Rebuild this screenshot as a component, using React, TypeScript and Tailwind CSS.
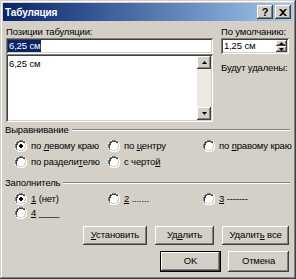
import React from "react";

const raised =
  "shadow-[inset_-1px_-1px_#404040,inset_1px_1px_#ffffff,inset_-2px_-2px_#808080,inset_2px_2px_#d4d0c8]";
const sunken =
  "shadow-[inset_1px_1px_#808080,inset_-1px_-1px_#ffffff,inset_2px_2px_#404040,inset_-2px_-2px_#d4d0c8]";

function Radio({ checked }: { checked?: boolean }) {
  return (
    <svg width="12" height="12" viewBox="0 0 12 12" className="shrink-0">
      <path d="M4 0h4l2 1 1 2 1 1v4l-1 2-1 1-2 1H4l-2-1-1-1-1-2V4l1-2 1-1z" fill="#ffffff" />
      <path d="M4 0.5h4M2 1.5h2M8 1.5h2M1.5 2v2M0.5 4v4M1.5 8v2" stroke="#808080" strokeWidth="1" fill="none" />
      <path d="M4 1.5h4M2 2.5h2M8 2.5h2M2.5 3v2M1.5 4v4" stroke="#404040" strokeWidth="1" fill="none" />
      <path d="M2 10.5h2M4 11.5h4M8 10.5h2M10.5 8v2M11.5 4v4M10.5 2v2" stroke="#ffffff" strokeWidth="1" fill="none" />
      <path d="M2 9.5h2M4 10.5h4M8 9.5h2M9.5 7v2M10.5 4v4M9.5 3v1" stroke="#d4d0c8" strokeWidth="1" fill="none" />
      {checked && <path d="M5 4h2v1h1v2h-1v1H5V7H4V5h1z" fill="#000000" />}
    </svg>
  );
}

function RadioItem({ checked, children, className = "" }: { checked?: boolean; children: React.ReactNode; className?: string }) {
  return (
    <div className={"flex items-center gap-[4px] shrink-0 " + className}>
      <Radio checked={checked} />
      <span className="leading-[13px] whitespace-nowrap">{children}</span>
    </div>
  );
}

function Btn({ children, className = "", isDefault = false }: { children: React.ReactNode; className?: string; isDefault?: boolean }) {
  if (isDefault) {
    return (
      <div className={"border border-black flex " + className}>
        <div className={"flex-1 flex items-center justify-center bg-[#d4d0c8] " + raised}>
          <span className="whitespace-nowrap">{children}</span>
        </div>
      </div>
    );
  }
  return (
    <div className={"flex items-center justify-center bg-[#d4d0c8] " + raised + " " + className}>
      <span className="whitespace-nowrap">{children}</span>
    </div>
  );
}

function GroupTitle({ children, className = "" }: { children: React.ReactNode; className?: string }) {
  return (
    <div className={"flex items-center h-[13px] " + className}>
      <span className="leading-[13px] pl-[2px] pr-[3px]">{children}</span>
      <div className="flex-1 flex flex-col mr-[3px]">
        <div className="h-px bg-[#808080]" />
        <div className="h-px bg-white" />
      </div>
    </div>
  );
}

function Arrow({ up }: { up?: boolean }) {
  return (
    <svg width="5" height="3" viewBox="0 0 5 3">
      {up ? <path d="M2.5 0L5 3H0z" fill="#000" /> : <path d="M0 0h5L2.5 3z" fill="#000" />}
    </svg>
  );
}

export default function App() {
  return (
    <div
      className={
        "w-[296px] h-[279px] bg-[#d4d0c8] p-[3px] flex flex-col text-[9.5px] tracking-[-0.15px] text-black font-['Liberation_Sans',Arial,sans-serif] shadow-[inset_-1px_-1px_#404040,inset_1px_1px_#d4d0c8,inset_-2px_-2px_#808080,inset_2px_2px_#ffffff]"
      }
    >
      {/* Title bar */}
      <div className="h-[18px] shrink-0 flex items-center bg-gradient-to-r from-[#0a246a] to-[#a6caf0] pl-[2px] pr-[2px]">
        <span className="font-bold text-white text-[10px] tracking-[-0.1px] leading-[13px] flex-1">Табуляция</span>
        <div className={"w-[16px] h-[14px] flex items-center justify-center bg-[#d4d0c8] font-bold text-[11px] leading-none " + raised}>?</div>
        <div className={"w-[16px] h-[14px] ml-[2px] flex items-center justify-center bg-[#d4d0c8] " + raised}>
          <svg width="8" height="7" viewBox="0 0 8 7">
            <path d="M0 0h2l2 2 2-2h2L5 3.5 8 7H6L4 5 2 7H0l3-3.5z" fill="#000" />
          </svg>
        </div>
      </div>

      {/* Top section */}
      <div className="flex shrink-0 pl-[3px] pt-[4px] gap-[8px]">
        <div className="w-[207px] flex flex-col">
          <div className="h-[13px] leading-[13px] whitespace-nowrap">Позиции табуляции:</div>
          <div className={"h-[16px] bg-white flex items-center pl-[2px] " + sunken}>
            <span className="bg-[#0a246a] text-white leading-[12px] px-px">6,25 см</span>
          </div>
          <div className={"h-[68px] bg-white flex p-[2px] " + sunken}>
            <div className="flex-1 pl-[1px] pt-[1px] leading-[13px]">6,25 см</div>
            <div className="w-[14px] flex flex-col bg-[#ece9e2]">
              <div className={"h-[13px] bg-[#d4d0c8] flex items-center justify-center " + raised}>
                <Arrow up />
              </div>
              <div className="flex-1" />
              <div className={"h-[13px] bg-[#d4d0c8] flex items-center justify-center " + raised}>
                <Arrow />
              </div>
            </div>
          </div>
        </div>
        <div className="w-[68px] flex flex-col">
          <div className="h-[13px] leading-[13px] whitespace-nowrap">По умолчанию:</div>
          <div className={"h-[16px] bg-white flex items-center p-[2px] " + sunken}>
            <span className="flex-1 leading-[12px] pl-[1px] whitespace-nowrap">1,25 см</span>
            <div className="w-[11px] h-full flex flex-col">
              <div className={"flex-1 bg-[#d4d0c8] flex items-center justify-center " + raised}>
                <Arrow up />
              </div>
              <div className={"flex-1 bg-[#d4d0c8] flex items-center justify-center " + raised}>
                <Arrow />
              </div>
            </div>
          </div>
          <div className="mt-[7px] h-[13px] leading-[13px] whitespace-nowrap">Будут удалены:</div>
        </div>
      </div>

      {/* Alignment */}
      <GroupTitle className="mt-[1px] shrink-0">Выравнивание</GroupTitle>
      <div className="flex flex-col shrink-0 pl-[12px] mt-[3px] gap-[3px]">
        <div className="flex h-[13px]">
          <RadioItem checked className="w-[93px]">по <u>л</u>евому краю</RadioItem>
          <RadioItem className="w-[95px]">по <u>ц</u>ентру</RadioItem>
          <RadioItem>по <u>п</u>равому краю</RadioItem>
        </div>
        <div className="flex h-[13px]">
          <RadioItem className="w-[93px]">по раздели<u>т</u>елю</RadioItem>
          <RadioItem>с черто<u>й</u></RadioItem>
        </div>
      </div>

      {/* Leader */}
      <GroupTitle className="mt-[8px] shrink-0">Заполнитель</GroupTitle>
      <div className="flex flex-col shrink-0 pl-[12px] mt-[3px] gap-[1px]">
        <div className="flex h-[13px]">
          <RadioItem checked className="w-[93px]"><u>1</u> (нет)</RadioItem>
          <RadioItem className="w-[95px]"><u>2</u> .......</RadioItem>
          <RadioItem><u>3</u> -------</RadioItem>
        </div>
        <div className="flex h-[13px]">
          <RadioItem><u>4</u> ____</RadioItem>
        </div>
      </div>

      {/* Buttons */}
      <div className="flex shrink-0 justify-end pr-[4px] mt-[7px] gap-[8px]">
        <Btn className="w-[64px] h-[19px]"><u>У</u>становить</Btn>
        <Btn className="w-[59px] h-[19px]">Уд<u>а</u>лить</Btn>
        <Btn className="w-[67px] h-[19px]">Удалит<u>ь</u> все</Btn>
      </div>
      <div className="flex shrink-0 justify-end pr-[4px] mt-[6px] gap-[7px]">
        <Btn isDefault className="w-[61px] h-[21px]">OK</Btn>
        <Btn className="w-[61px] h-[21px]">Отмена</Btn>
      </div>
    </div>
  );
}
